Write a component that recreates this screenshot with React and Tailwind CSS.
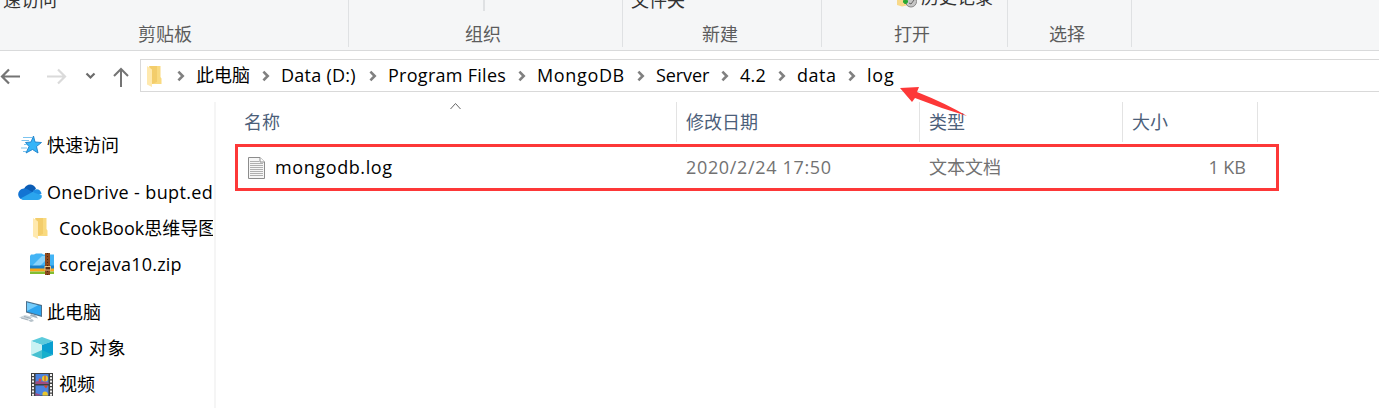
import React from "react";

const font = "font-['Open_Sans','Noto_Sans_CJK_SC',sans-serif] font-normal";

function RibbonGroup({ width, label, labelClass, children }) {
  return (
    <div className={`h-[50px] shrink-0 ${width}`}>
      <div className="h-[19px] overflow-hidden">{children}</div>
      <div className={`h-[30px] leading-[30px] text-[#5c5c5c] whitespace-nowrap ${labelClass}`}>{label}</div>
    </div>
  );
}

const Divider = () => <div className="h-[47px] w-px shrink-0 bg-[#dfe1e3]" />;

const FolderIcon = ({ className }) => (
  <svg className={className} width="15" height="21" viewBox="0 0 15 21">
    <path d="M2 0H13.500V11L14.500 12.500V18H3Z" fill="#f9da80" />
    <path d="M3 0H10V16L5 18Z" fill="#f3cd6b" />
    <path d="M0 0L5 3.500V21L0 18.500Z" fill="#ffe9ae" />
  </svg>
);

const Chevron = () => (
  <svg className="shrink-0" width="8" height="12" viewBox="0 0 8 12">
    <path d="M1.400 1.700L5.700 6L1.400 10.300" fill="none" stroke="#808080" strokeWidth="2.600" />
  </svg>
);

const crumbs = [
  ["此电脑", "w-[85px]", ""],
  ["Data (D:)", "w-[107px]", "tracking-[0.25px]"],
  ["Program Files", "w-[149px]", "tracking-[0.28px]"],
  ["MongoDB", "w-[119px]", "tracking-[0.65px]"],
  ["Server", "w-[84px]", "tracking-[-0.1px]"],
  ["4.2", "w-[57px]", "tracking-[0.3px]"],
  ["data", "w-[70px]", "tracking-[0.5px]"],
  ["log", "w-[60px]", "tracking-[0.8px]"],
];

const StarIcon = () => (
  <svg width="22" height="20" viewBox="0 0 22 20">
    <path d="M12.500 1L14 7L20.500 7.500L15.500 11.500L17 18L11.500 14.500L5 18L8 11.500L4.500 7.500L10 7Z" fill="#35b4f8" stroke="#1b7fc8" strokeWidth="0.900" />
    <path d="M2 2.500H11M0.500 5.500H8M3 9.500H6M0 13H6M2 16.500H5" stroke="#7cc3ee" strokeWidth="1" />
  </svg>
);

const CloudIcon = () => (
  <svg width="24" height="16" viewBox="0 0 24 16">
    <path d="M6 5C8 0 15-1.500 18 4.500L14 9Z" fill="#0b5cb5" />
    <path d="M5 15.500C-1 15-2 6 5.500 4.500C9 4 11 6 15 8.500L7 15.500Z" fill="#1374d3" />
    <path d="M14.500 8C16 4 23 4 23.500 10L18 12Z" fill="#1f8fe4" />
    <path d="M2.500 14.500L14.500 8L24 11.500C24 14 22 16 19.500 16H5Z" fill="#2aa5ee" />
  </svg>
);

const ZipIcon = () => (
  <svg width="24" height="22" viewBox="0 0 24 22">
    <path d="M0 3L1 1.500H4L6 0.500H12L13 1.500H24V14H0Z" fill="#43b4f5" />
    <path d="M2 13L12 3H15V8L10 13Z" fill="#8ad3fb" />
    <path d="M0 12.500H24V16H0Z" fill="#1a80c8" />
    <path d="M0 15.500H24V18.500H0Z" fill="#f9a51a" />
    <path d="M0 18.500H24V21H0Z" fill="#82bd31" />
    <path d="M15 0H20V22H15Z" fill="#8b481d" />
    <path d="M17.500 0V22" stroke="#4c240d" strokeDasharray="1 2" />
    <rect x="15" y="13.500" width="5.500" height="3.500" fill="#5b2d12" stroke="#e5c184" />
  </svg>
);

const PcIcon = () => (
  <svg width="24" height="22" viewBox="0 0 24 22">
    <path d="M7 0L23 4V16L7 11.500Z" fill="#4d708c" />
    <path d="M8 1.500L22 5V14.500L8 10.500Z" fill="#2da5f0" />
    <path d="M8 1.500L19 4.200L8 10Z" fill="#76ccfa" />
    <path d="M12 13L17 14.500L19 17.500L11 15Z" fill="#a4b3be" />
    <path d="M0 16.500L6 14L14 16L9 19Z" fill="#ccd6dc" />
    <path d="M2 17L9 19M5 15.500L12 17.500" stroke="#8b99a5" strokeWidth="0.700" />
    <path d="M9 19.500L13 18L15 20L12 21Z" fill="#b6c2ca" />
  </svg>
);

const CubeIcon = () => (
  <svg width="22" height="22" viewBox="0 0 22 22">
    <path d="M11 0L22 4L11 8L0 4Z" fill="#5ccbdc" />
    <path d="M0 4L11 8V15L0 18Z" fill="#c9f2f3" />
    <path d="M22 4L11 8V15L22 18Z" fill="#0a9fd0" />
    <path d="M0 18L11 13V22Z" fill="#46c0d0" />
    <path d="M22 18L11 13V22Z" fill="#17b0cc" />
  </svg>
);

const FilmIcon = () => (
  <svg width="22" height="23" viewBox="0 0 22 23">
    <rect width="22" height="23" fill="#3f3f3f" />
    <path d="M2 1V23M20 1V23" stroke="#f2f2f2" strokeWidth="2" strokeDasharray="2 1.300" />
    <rect x="4.500" y="1" width="13" height="10" fill="#4b83e0" />
    <rect x="4.500" y="12.500" width="13" height="10" fill="#4b83e0" />
    <path d="M4.500 8.500L8 8L17.500 9.500V11H4.500Z" fill="#a04c80" />
    <circle cx="14" cy="5.500" r="3" fill="#e9c72f" />
    <path d="M14 2.500V8.500" stroke="#c23a2c" strokeWidth="1" />
    <circle cx="9" cy="7" r="1.400" fill="#e04c38" />
    <path d="M12.500 12.500H17L15 15.500Z" fill="#d44a2a" />
    <path d="M11.500 22.500Q11 18.500 14 18.500Q17 18.500 17 22.500Z" fill="#e9c72f" />
    <path d="M4.500 20L9 21.500V22.500H4.500Z" fill="#a04c80" />
  </svg>
);

function TreeItem({ pad, iconWidth, icon, label, tracking = "" }) {
  return (
    <div className={`flex h-9 items-center whitespace-nowrap ${pad}`}>
      <div className={`flex shrink-0 ${iconWidth}`}>{icon}</div>
      <span className={`leading-[36px] ${tracking}`}>{label}</span>
    </div>
  );
}

const ColDivider = () => <div className="h-10 w-px shrink-0 bg-[#e3e3e3]" />;

export default function App() {
  return (
    <div className={`relative h-[408px] w-[1379px] overflow-hidden bg-white text-[18px] text-black ${font}`}>
      <div className="flex h-[51px] border-b border-[#d9dadb] bg-[#f5f6f7]">
        <RibbonGroup width="w-[348px]" label="剪贴板" labelClass="pl-[138px]">
          <div className="-mt-[13px] pl-[3px] leading-[26px] text-[#333]">速访问</div>
        </RibbonGroup>
        <Divider />
        <RibbonGroup width="w-[273px]" label="组织" labelClass="pl-[116px]">
          <div className="ml-[134px] h-[11px] w-[2px] bg-[#dfe1e3]" />
        </RibbonGroup>
        <Divider />
        <RibbonGroup width="w-[198px]" label="新建" labelClass="pl-[79px]">
          <div className="-mt-[13px] pl-[8px] leading-[26px] text-[#333]">文件夹</div>
        </RibbonGroup>
        <Divider />
        <RibbonGroup width="w-[185px]" label="打开" labelClass="pl-[72px]">
          <div className="flex">
            <svg className="ml-[75px] shrink-0" width="22" height="8" viewBox="0 0 22 8">
              <path d="M0 0H12V5L5 6.500L0 5Z" fill="#f8d98a" />
              <circle cx="14" cy="1.500" r="5.500" fill="#c6c6c6" stroke="#888" />
              <path d="M12 3L14 4L17 0" fill="none" stroke="#666" />
              <path d="M8.500 0V4M6 1.500H11" stroke="#27a832" strokeWidth="2.500" />
            </svg>
            <div className="-mt-[16px] pl-[2px] leading-[26px] text-[#333]">历史记录</div>
          </div>
        </RibbonGroup>
        <Divider />
        <RibbonGroup width="w-[123px]" label="选择" labelClass="pl-[41px]" />
        <Divider />
      </div>

      <div className="flex h-[51px] pt-2">
        <div className="flex h-[33px] w-[140px] shrink-0 items-center">
          <svg width="140" height="33" viewBox="0 0 140 33" fill="none">
            <path d="M20 17.500H2M9 10.500L2 17.500L9 24.500" stroke="#747474" strokeWidth="2.200" />
            <path d="M47 17.500H65M58 10.500L65 17.500L58 24.500" stroke="#dadada" strokeWidth="2.200" />
            <path d="M86.500 14.500L90.500 18.500L94.500 14.500" stroke="#6b6b6b" strokeWidth="2.200" />
            <path d="M121 28V10M114 17L121 10L128 17" stroke="#747474" strokeWidth="2" />
          </svg>
        </div>
        <div className="flex h-[33px] grow items-center border-y border-l border-[#d9d9d9] pl-[6px]">
          <FolderIcon className="mt-[1px] mr-[15px] shrink-0" />
          {crumbs.map(([label, width, tracking]) => (
            <div key={label} className={`flex shrink-0 items-center whitespace-nowrap ${width}`}>
              <Chevron />
              <span className={`pl-[11px] leading-[31px] ${tracking}`}>{label}</span>
            </div>
          ))}
        </div>
      </div>

      <div className="flex h-[306px]">
        <aside className="w-[216px] shrink-0 border-r-2 border-[#f5f5f5] pt-[25px]">
          <div className="w-[213px] overflow-hidden">
            <TreeItem pad="pl-[21px]" iconWidth="w-[26px]" icon={<StarIcon />} label="快速访问" />
            <div className="h-[11px]" />
            <TreeItem pad="pl-[18px]" iconWidth="w-[29px]" icon={<CloudIcon />} label="OneDrive - bupt.ed" tracking="tracking-[0.36px]" />
            <TreeItem pad="pl-[33px]" iconWidth="w-[26px]" icon={<FolderIcon />} label="CookBook思维导图" />
            <TreeItem pad="pl-[30px]" iconWidth="w-[29px]" icon={<ZipIcon />} label="corejava10.zip" tracking="tracking-[0.22px]" />
            <div className="h-[12px]" />
            <TreeItem pad="pl-[19px]" iconWidth="w-[28px]" icon={<PcIcon />} label="此电脑" />
            <TreeItem pad="pl-[31px]" iconWidth="w-[28px]" icon={<CubeIcon />} label="3D 对象" tracking="tracking-[0.6px]" />
            <TreeItem pad="pl-[31px]" iconWidth="w-[28px]" icon={<FilmIcon />} label="视频" />
          </div>
        </aside>
        <main className="grow">
          <div className="flex h-[42px] leading-[40px] text-[#4c607a]">
            <div className="flex w-[460px] pl-[28px]">
              <span className="w-[206px]">名称</span>
              <svg width="12" height="8" viewBox="0 0 12 8">
                <path d="M0.500 7L5.500 1.500L10.500 7" fill="none" stroke="#666" />
              </svg>
            </div>
            <ColDivider />
            <div className="w-[242px] pl-[9px]">修改日期</div>
            <ColDivider />
            <div className="w-[202px] pl-[9px]">类型</div>
            <ColDivider />
            <div className="w-[134px] pl-[9px]">大小</div>
            <ColDivider />
          </div>
          <div className="ml-[19px] flex h-[47px] w-[1044px] items-center border-[3px] border-[#fd3838] leading-[41px] text-[#727272]">
            <svg className="ml-[10px] mr-[10px] shrink-0" width="17" height="22" viewBox="0 0 17 22">
              <path d="M0.500 0.500H12L16.500 5V21.500H0.500Z" fill="#f6f6f6" stroke="#8c8c8c" />
              <path d="M12 0.500V5H16.500" fill="#fff" stroke="#8c8c8c" />
              <path d="M2 4.500H11M2 6.500H15M2 8.500H15M2 10.500H15M2 12.500H15M2 14.500H15M2 16.500H15M2 18.500H15" stroke="#b0b0b0" />
            </svg>
            <span className="w-[411px] tracking-[0.6px] text-black">mongodb.log</span>
            <span className="w-[243px] tracking-[0.66px]">2020/2/24 17:50</span>
            <span className="w-[203px]">文本文档</span>
            <span className="w-[114px] text-right">1 KB</span>
          </div>
        </main>
      </div>

      <svg className="absolute left-[900px] top-[86px]" width="68" height="32" viewBox="0 0 68 32">
        <path d="M0 2L19 1L17 6Q45 17 67 30Q40 22 15 12L12 16Z" fill="#fd3838" />
      </svg>
    </div>
  );
}
